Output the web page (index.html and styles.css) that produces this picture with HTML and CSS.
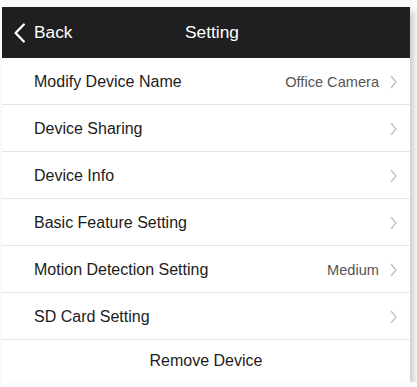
FILE: index.html
```html
<!DOCTYPE html>
<html lang="en">
<head>
    <meta charset="UTF-8">
    <meta name="viewport" content="width=device-width, initial-scale=1.0">
    <title>Setting</title>
    <link rel="stylesheet" href="styles.css">
</head>
<body>
    <div class="card">
        <div class="topbar">
            <div class="back">
                <svg class="back-icon" width="11" height="20" viewBox="0 0 11 20">
                    <polyline points="9.8,1.5 1.6,10 9.8,18.5" fill="none" stroke="#fff" stroke-width="2.3" stroke-linecap="round" stroke-linejoin="round"/>
                </svg>
                <span>Back</span>
            </div>
            <div class="title">Setting</div>
            <div></div>
        </div>

        <div class="row">
            <span class="label">Modify Device Name</span>
            <span class="value">Office Camera</span>
            <svg class="chev" width="7" height="14" viewBox="0 0 7 14"><polyline points="1,1 6,7 1,13" fill="none" stroke="#bdbdbd" stroke-width="1.2"/></svg>
        </div>
        <div class="row">
            <span class="label">Device Sharing</span>
            <span class="value"></span>
            <svg class="chev" width="7" height="14" viewBox="0 0 7 14"><polyline points="1,1 6,7 1,13" fill="none" stroke="#bdbdbd" stroke-width="1.2"/></svg>
        </div>
        <div class="row">
            <span class="label">Device Info</span>
            <span class="value"></span>
            <svg class="chev" width="7" height="14" viewBox="0 0 7 14"><polyline points="1,1 6,7 1,13" fill="none" stroke="#bdbdbd" stroke-width="1.2"/></svg>
        </div>
        <div class="row">
            <span class="label">Basic Feature Setting</span>
            <span class="value"></span>
            <svg class="chev" width="7" height="14" viewBox="0 0 7 14"><polyline points="1,1 6,7 1,13" fill="none" stroke="#bdbdbd" stroke-width="1.2"/></svg>
        </div>
        <div class="row">
            <span class="label">Motion Detection Setting</span>
            <span class="value">Medium</span>
            <svg class="chev" width="7" height="14" viewBox="0 0 7 14"><polyline points="1,1 6,7 1,13" fill="none" stroke="#bdbdbd" stroke-width="1.2"/></svg>
        </div>
        <div class="row">
            <span class="label">SD Card Setting</span>
            <span class="value"></span>
            <svg class="chev" width="7" height="14" viewBox="0 0 7 14"><polyline points="1,1 6,7 1,13" fill="none" stroke="#bdbdbd" stroke-width="1.2"/></svg>
        </div>
        <div class="remove">Remove Device</div>
    </div>
</body>
</html>
```

FILE: styles.css
```css
body {
    margin: 0;
    background: #fbfbfb;
    font-family: "Liberation Sans", Arial, sans-serif;
}
.card {
    width: 408px;
    margin: 7px 0 0 2px;
    background: #fff;
    box-shadow: 4px 4px 6px rgba(0,0,0,0.18);
}
.topbar {
    height: 51px;
    background: #1f1f21;
    color: #fff;
    display: grid;
    grid-template-columns: 1fr auto 1fr;
    align-items: center;
    font-size: 17.3px;
}
.back {
    display: flex;
    align-items: center;
    padding-left: 12px;
    gap: 9px;
}
.title {
    padding-left: 12px;
}
.row {
    box-sizing: border-box;
    height: 47px;
    border-bottom: 1px solid #e4e4e4;
    display: flex;
    align-items: center;
    padding: 2px 13px 0 32px;
}
.label {
    flex: 1;
    font-size: 16px;
    color: #1c1c1c;
}
.value {
    font-size: 14.6px;
    color: #555;
    margin-right: 11px;
}
.remove {
    height: 42px;
    display: flex;
    align-items: center;
    justify-content: center;
    font-size: 16px;
    color: #1c1c1c;
}
```
